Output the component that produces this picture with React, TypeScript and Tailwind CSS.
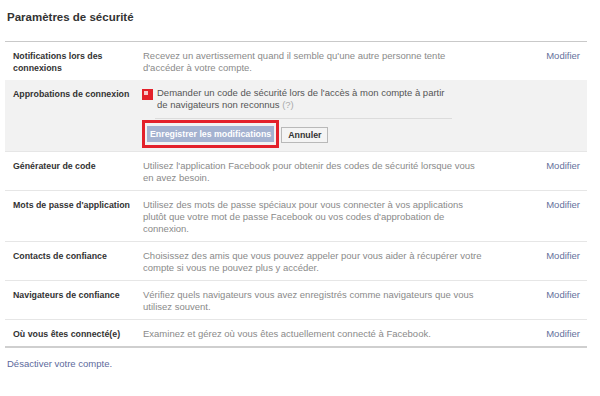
const font = { fontFamily: '"Liberation Sans", Arial, sans-serif' };

type Row = { label: React.ReactNode; desc: React.ReactNode };

const rows: Row[] = [
  {
    label: 'Générateur de code',
    desc: (
      <>
        Utilisez l'application Facebook pour obtenir des codes de sécurité lorsque vous
        <br />
        en avez besoin.
      </>
    ),
  },
  {
    label: "Mots de passe d'application",
    desc: (
      <>
        Utilisez des mots de passe spéciaux pour vous connecter à vos applications
        <br />
        plutôt que votre mot de passe Facebook ou vos codes d'approbation de
        <br />
        connexion.
      </>
    ),
  },
  {
    label: 'Contacts de confiance',
    desc: (
      <>
        Choisissez des amis que vous pouvez appeler pour vous aider à récupérer votre
        <br />
        compte si vous ne pouvez plus y accéder.
      </>
    ),
  },
  {
    label: 'Navigateurs de confiance',
    desc: (
      <>
        Vérifiez quels navigateurs vous avez enregistrés comme navigateurs que vous
        <br />
        utilisez souvent.
      </>
    ),
  },
  {
    label: 'Où vous êtes connecté(e)',
    desc: 'Examinez et gérez où vous êtes actuellement connecté à Facebook.',
  },
];

function SettingRow({ label, desc, first }: Row & { first?: boolean }) {
  return (
    <div className={`flex pt-2 pb-[6px] ${first ? '' : 'border-t border-[#e6e6e6]'}`}>
      <div className="w-[138px] shrink-0 pl-2 text-[8.8px] font-bold leading-[12px] text-[#333]">{label}</div>
      <div className="flex-1 text-[9.5px] leading-[12px] text-[#8a8a8a]">{desc}</div>
      <div className="pr-[7px] text-[9.5px] leading-[12px] text-[#66709c]">Modifier</div>
    </div>
  );
}

export default function App() {
  return (
    <div className="h-[396px] w-[600px] bg-white pt-[10px]" style={font}>
      <h1 className="pl-[7px] text-[11.5px] font-bold leading-[14px] text-[#333]">Paramètres de sécurité</h1>

      <div className="mx-[5px] mt-[17px] w-[582px] border-t border-[#c9c9c9]">
        <SettingRow
          first
          label={
            <>
              Notifications lors des
              <br />
              connexions
            </>
          }
          desc={
            <>
              Recevez un avertissement quand il semble qu'une autre personne tente
              <br />
              d'accéder à votre compte.
            </>
          }
        />

        <div className="flex bg-[#f2f2f2]">
          <div className="w-[137px] shrink-0 pl-2 pt-2 text-[8.8px] font-bold leading-[12px] text-[#333]">
            Approbations de connexion
          </div>
          <div className="flex-1 pt-[7px] pb-[3px]">
            <div className="flex items-start gap-[4px]">
              <div className="mt-[2px] flex h-[11px] w-[11px] shrink-0 bg-[#e3202a] pl-[2px] pt-[2px]">
                <div className="h-[4px] w-[4px] bg-[#f7c9cb]" />
              </div>
              <div className="text-[9.5px] leading-[12px] text-[#555]">
                Demander un code de sécurité lors de l'accès à mon compte à partir
                <br />
                de navigateurs non reconnus <span className="text-[#aaa]">(?)</span>
              </div>
            </div>
            <div className="ml-[13px] mt-[7px] w-[297px] border-t border-[#dcdcdc]" />
            <div className="mt-[1px] flex items-center gap-[2px]">
              <div className="border-[3px] border-[#e3202a] px-[2px] py-[3px]">
                <div className="bg-[#a4b2d0] px-[3px] text-[8.8px] font-bold leading-[16px] text-white">
                  Enregistrer les modifications
                </div>
              </div>
              <div className="mt-[2px] border border-[#b9b9b9] bg-[#f4f4f4] px-[6px] text-[8.8px] font-bold leading-[14px] text-[#333]">
                Annuler
              </div>
            </div>
          </div>
        </div>

        {rows.map((r) => (
          <SettingRow key={String(r.label)} label={r.label} desc={r.desc} />
        ))}

        <div className="border-t-2 border-[#cfcfcf]" />
      </div>

      <div className="mt-[10px] pl-[7px] text-[9.5px] leading-[12px] text-[#5d6a9c]">Désactiver votre compte.</div>
    </div>
  );
}
